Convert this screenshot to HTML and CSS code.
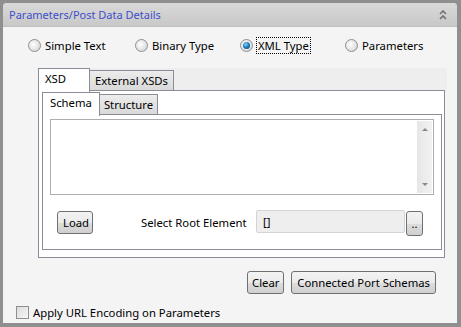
FILE: index.html
```html
<!DOCTYPE html>
<html lang="en">
  <head>
    <meta charset="UTF-8" />
    <title>Parameters/Post Data Details</title>
    <link rel="stylesheet" href="styles.css">
  </head>
  <body>
    <div class="panel">
      <div class="header">
        <span class="title">Parameters/Post Data Details</span>
        <svg class="collapse" width="8" height="10" viewBox="0 0 8 10">
          <path d="M1 4 L4 1 L7 4 M1 9 L4 6 L7 9" stroke="#707070" stroke-width="1.6" fill="none"></path>
        </svg>
      </div>

      <div class="content">
        <div class="radio-row">
          <label class="radio"><span class="dot"></span>Simple Text</label>
          <label class="radio"><span class="dot"></span>Binary Type</label>
          <label class="radio"><span class="dot checked"></span><span class="focus">XML Type</span></label>
          <label class="radio"><span class="dot"></span>Parameters</label>
        </div>

        <div class="tabs outer">
          <div class="tab-strip">
            <span class="tab active">XSD</span>
            <span class="tab">External XSDs</span>
          </div>
          <div class="tab-pane">
            <div class="tabs inner">
              <div class="tab-strip">
                <span class="tab active">Schema</span>
                <span class="tab">Structure</span>
              </div>
              <div class="tab-pane">
                <div class="editor">
                  <div class="scrollbar">
                    <span class="arrow up"></span>
                    <span class="arrow down"></span>
                  </div>
                </div>
                <div class="root-row">
                  <button class="btn load">Load</button>
                  <span class="root-label">Select Root Element</span>
                  <div class="root-field">[]</div>
                  <button class="btn browse">..</button>
                </div>
              </div>
            </div>
          </div>
        </div>

        <div class="actions">
          <button class="btn clear">Clear</button>
          <button class="btn">Connected Port Schemas</button>
        </div>

        <label class="check"><span class="box"></span>Apply URL Encoding on Parameters</label>
      </div>
    </div>
  </body>
</html>
```

FILE: styles.css
```css
body {
  margin: 0;
  padding: 3px 4px 4px 3px;
  background: #8f8f8f;
  font-family: "Noto Sans", "Open Sans", sans-serif;
  font-size: 11.3px;
  color: #000000;
}

.panel {
  width: 454px;
  height: 320px;
  background: #f4f4f4;
  border-radius: 4px 4px 0 0;
  overflow: hidden;
  display: flex;
  flex-direction: column;
}

.header {
  flex-shrink: 0;
  height: 23px;
  padding: 0 10px 0 6px;
  display: flex;
  align-items: center;
  justify-content: space-between;
  background: linear-gradient(#d9d9d9, #c8c8c8);
  border-bottom: 1px solid #c0c0c0;
}

.title {
  color: #3d4fc9;
  font-size: 11px;
}

.collapse {
  margin-top: 1px;
}

.content {
  flex: 1;
  display: flex;
  flex-direction: column;
}

/* radio buttons */
.radio-row {
  display: grid;
  grid-template-columns: 107px 105px 105px auto;
  padding: 7px 0 0 25px;
  height: 22px;
  align-items: center;
}

.radio {
  display: flex;
  align-items: center;
  gap: 4px;
}

.dot {
  width: 11px;
  height: 11px;
  border-radius: 50%;
  border: 1px solid #8e8f8f;
  background: radial-gradient(circle at 40% 40%, #ffffff 0%, #e4e4e4 55%, #c9c9c9 100%);
  position: relative;
}

.dot.checked::after {
  content: "";
  position: absolute;
  left: 2px;
  top: 2px;
  width: 7px;
  height: 7px;
  border-radius: 50%;
  background: radial-gradient(circle at 40% 35%, #8fd3ff 0%, #1c80c4 45%, #0b3d6e 100%);
}

.focus {
  border: 1px dotted #000000;
  padding: 0 1px;
  margin-left: -1px;
}

/* tabs */
.tabs.outer {
  margin: 12px 0 0 35px;
  width: 407px;
}

.tab-strip {
  display: flex;
  align-items: flex-end;
  position: relative;
  z-index: 1;
}

.outer > .tab-strip {
  height: 22px;
  background: #eeeeee;
  margin-right: -2px;
}

.tab {
  height: 19px;
  padding: 0 4px;
  border: 1px solid #8c8c98;
  border-bottom: none;
  border-left: none;
  background: linear-gradient(#ececec, #d9d9d9);
  line-height: 19px;
}

.tab.active {
  height: 23px;
  background: #ffffff;
  border-left: 1px solid #8c8c98;
  margin-bottom: -1px;
  line-height: 20px;
  padding: 0 6px;
  align-self: flex-start;
}

.outer > .tab-strip > .tab {
  padding: 0 5px;
}

.outer > .tab-strip > .tab.active {
  width: 38px;
  padding: 0 6px;
}

.outer > .tab-pane {
  height: 165px;
  border: 1px solid #8c8c98;
  background: #ffffff;
  padding: 1px 2px 0 3px;
}

.tabs.inner > .tab-strip {
  height: 22px;
}

.inner > .tab-strip > .tab.active {
  padding: 0 7px;
}

.inner > .tab-pane {
  height: 130px;
  border: 1px solid #8c8c98;
  background: #ffffff;
  padding: 4px 7px 0 7px;
}

.editor {
  height: 74px;
  border: 1px solid #abadb3;
  display: flex;
  justify-content: flex-end;
}

.scrollbar {
  width: 15px;
  margin: 1px 1px 1px 0;
  background: linear-gradient(90deg, #e6e6e6, #f2f2f2);
  display: flex;
  flex-direction: column;
  justify-content: space-between;
  align-items: center;
  padding: 7px 0;
  box-sizing: border-box;
}

.arrow {
  width: 0;
  height: 0;
  border-left: 3px solid transparent;
  border-right: 3px solid transparent;
}

.arrow.up {
  border-bottom: 3px solid #8a8a8a;
}

.arrow.down {
  border-top: 3px solid #8a8a8a;
}

.root-row {
  display: flex;
  align-items: flex-start;
  margin: 15px 0 0 7px;
}

.root-row .load {
  width: 36px;
  margin-top: 1px;
}

.root-label {
  margin-left: 48px;
  width: 115px;
  line-height: 22px;
  padding-top: 2px;
}

.root-field {
  width: 141px;
  height: 21px;
  line-height: 21px;
  border: 1px solid #d4d4d4;
  border-radius: 2px;
  background: #eeeeee;
  padding-left: 6px;
}

/* buttons */
.btn {
  font-family: inherit;
  font-size: 11.3px;
  height: 23px;
  padding: 0 5px;
  border: 1px solid #707070;
  border-radius: 3px;
  background: linear-gradient(#f3f3f3 0%, #ebebeb 50%, #dddddd 51%, #cfcfcf 100%);
  color: #000000;
}

.root-row .browse {
  width: 17px;
  height: 25px;
  margin: 1px 0 0 1px;
  padding: 0;
}

.actions {
  display: flex;
  justify-content: flex-end;
  gap: 7px;
  padding: 13px 21px 0 0;
}

.clear {
  width: 37px;
  padding: 0;
}

.check {
  display: flex;
  align-items: center;
  gap: 4px;
  margin: 11px 0 0 13px;
}

.box {
  width: 11px;
  height: 11px;
  border: 1px solid #8e8f8f;
  background: linear-gradient(135deg, #dcdcdc, #f6f6f6);
}
```
